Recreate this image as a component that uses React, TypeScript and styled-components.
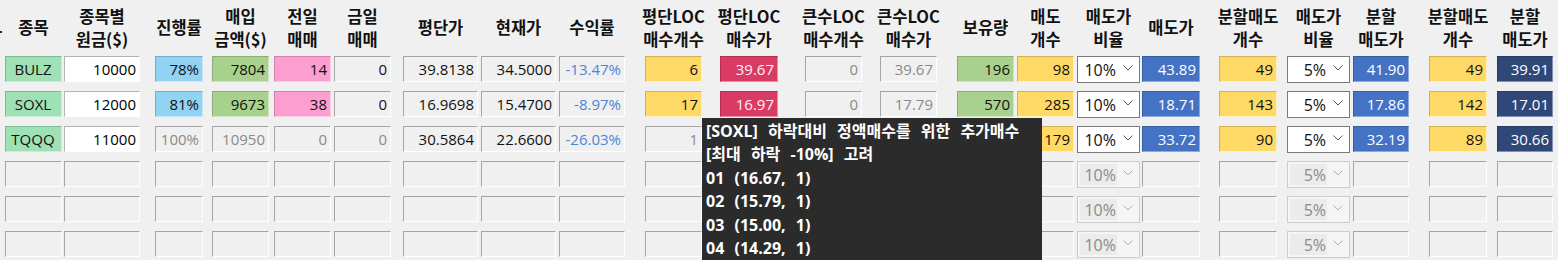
import React from "react";
import styled, { createGlobalStyle, css } from "styled-components";

const GlobalStyle = createGlobalStyle`
  html, body { margin: 0; padding: 0; background: #f0f0f0; }
  body { width: 1558px; height: 260px; overflow: hidden; }
`;

type Variant =
  | "name" | "input" | "sky" | "green" | "pink" | "ro" | "roBlue" | "dis"
  | "yellow" | "red" | "blue" | "navy" | "empty" | "combo" | "comboDis";

interface ColDef { l: number; w: number; h: string }

const cols: ColDef[] = [
  { l: 5, w: 57, h: "종목" },
  { l: 64, w: 76, h: "종목별\n원금($)" },
  { l: 155, w: 48, h: "진행률" },
  { l: 212, w: 57, h: "매입\n금액($)" },
  { l: 274, w: 57, h: "전일\n매매" },
  { l: 334, w: 57, h: "금일\n매매" },
  { l: 403, w: 75, h: "평단가" },
  { l: 481, w: 75, h: "현재가" },
  { l: 559, w: 66, h: "수익률" },
  { l: 645, w: 57, h: "평단LOC\n매수개수" },
  { l: 720, w: 58, h: "평단LOC\n매수가" },
  { l: 805, w: 57, h: "큰수LOC\n매수개수" },
  { l: 880, w: 57, h: "큰수LOC\n매수가" },
  { l: 957, w: 57, h: "보유량" },
  { l: 1017, w: 57, h: "매도\n개수" },
  { l: 1077, w: 63, h: "매도가\n비율" },
  { l: 1142, w: 58, h: "매도가" },
  { l: 1219, w: 58, h: "분할매도\n개수" },
  { l: 1287, w: 63, h: "매도가\n비율" },
  { l: 1353, w: 56, h: "분할\n매도가" },
  { l: 1429, w: 58, h: "분할매도\n개수" },
  { l: 1497, w: 56, h: "분할\n매도가" },
];

const gaps = cols.map((c, i) => (i === 0 ? c.l : c.l - (cols[i - 1].l + cols[i - 1].w)));

type CellSpec = [Variant, string];

const rows: CellSpec[][] = [
  [
    ["name", "BULZ"], ["input", "10000"], ["sky", "78%"], ["green", "7804"], ["pink", "14"], ["ro", "0"],
    ["ro", "39.8138"], ["ro", "34.5000"], ["roBlue", "-13.47%"], ["yellow", "6"], ["red", "39.67"],
    ["dis", "0"], ["dis", "39.67"], ["green", "196"], ["yellow", "98"], ["combo", "10%"], ["blue", "43.89"],
    ["yellow", "49"], ["combo", "5%"], ["blue", "41.90"], ["yellow", "49"], ["navy", "39.91"],
  ],
  [
    ["name", "SOXL"], ["input", "12000"], ["sky", "81%"], ["green", "9673"], ["pink", "38"], ["ro", "0"],
    ["ro", "16.9698"], ["ro", "15.4700"], ["roBlue", "-8.97%"], ["yellow", "17"], ["red", "16.97"],
    ["dis", "0"], ["dis", "17.79"], ["green", "570"], ["yellow", "285"], ["combo", "10%"], ["blue", "18.71"],
    ["yellow", "143"], ["combo", "5%"], ["blue", "17.86"], ["yellow", "142"], ["navy", "17.01"],
  ],
  [
    ["name", "TQQQ"], ["input", "11000"], ["dis", "100%"], ["dis", "10950"], ["dis", "0"], ["dis", "0"],
    ["ro", "30.5864"], ["ro", "22.6600"], ["roBlue", "-26.03%"], ["dis", "1"], ["dis", "30.59"],
    ["dis", "0"], ["dis", "0"], ["green", "358"], ["yellow", "179"], ["combo", "10%"], ["blue", "33.72"],
    ["yellow", "90"], ["combo", "5%"], ["blue", "32.19"], ["yellow", "89"], ["navy", "30.66"],
  ],
];

const emptyRow: CellSpec[] = cols.map((_, i) =>
  i === 15 ? ["comboDis", "10%"] : i === 18 ? ["comboDis", "5%"] : ["empty", ""]
);
const allRows = [...rows, emptyRow, emptyRow, emptyRow];

const palette: Record<string, { bg: string; fg: string; tl: string; br: string }> = {
  name: { bg: "#9fe0b4", fg: "#111", tl: "#7fb893", br: "#c9eed5" },
  input: { bg: "#ffffff", fg: "#000", tl: "#b4b4b4", br: "#ffffff" },
  sky: { bg: "#92d3f3", fg: "#111", tl: "#78adc8", br: "#c4e8fa" },
  green: { bg: "#a9d18e", fg: "#111", tl: "#8bac74", br: "#cfe5c0" },
  pink: { bg: "#fc9fd0", fg: "#111", tl: "#cf82aa", br: "#fdcbe5" },
  ro: { bg: "#f0f0f0", fg: "#111", tl: "#a5a5a5", br: "#ffffff" },
  roBlue: { bg: "#f0f0f0", fg: "#4a86d8", tl: "#a5a5a5", br: "#ffffff" },
  dis: { bg: "#f0f0f0", fg: "#8a8a8a", tl: "#a5a5a5", br: "#ffffff" },
  empty: { bg: "#f0f0f0", fg: "#8a8a8a", tl: "#a5a5a5", br: "#ffffff" },
  yellow: { bg: "#ffd966", fg: "#111", tl: "#d1b254", br: "#fff0c0" },
  red: { bg: "#da3b64", fg: "#fff2f5", tl: "#b33052", br: "#ea8aa3" },
  blue: { bg: "#4472c4", fg: "#ffffff", tl: "#385ea1", br: "#8ea9dc" },
  navy: { bg: "#2f4878", fg: "#ffffff", tl: "#263b62", br: "#7f93b8" },
};

const Page = styled.div`
  position: relative;
  width: 1558px;
  height: 260px;
  overflow: hidden;
  background: #f0f0f0;
`;

const HeaderRow = styled.div`
  display: flex;
  height: 56px;
`;

const EdgeDot = styled.div`
  width: 2px;
  height: 2px;
  margin-top: 31px;
  background: #222;
  flex: none;
`;

const HeadCell = styled.div<{ $w: number; $ml: number }>`
  flex: none;
  width: ${(p) => p.$w}px;
  margin-left: ${(p) => p.$ml}px;
  display: flex;
  align-items: center;
  justify-content: center;
  font-family: "Noto Sans CJK KR", sans-serif;
  font-weight: 700;
  font-size: 16.5px;
  line-height: 23px;
  color: #111;
  text-align: center;
  white-space: pre;
  padding-bottom: 1px;
`;

const Body = styled.div`
  display: flex;
  flex-direction: column;
  gap: 9px;
`;

const Row = styled.div`
  display: flex;
  height: 26px;
`;

const Cell = styled.div<{ $w: number; $ml: number; $v: Variant }>`
  flex: none;
  box-sizing: border-box;
  width: ${(p) => p.$w}px;
  margin-left: ${(p) => p.$ml}px;
  height: 26px;
  background: ${(p) => palette[p.$v].bg};
  color: ${(p) => palette[p.$v].fg};
  border-top: 1px solid ${(p) => palette[p.$v].tl};
  border-left: 1px solid ${(p) => palette[p.$v].tl};
  border-right: 1px solid ${(p) => palette[p.$v].br};
  border-bottom: 1px solid ${(p) => palette[p.$v].br};
  font-family: "Open Sans", "Noto Sans CJK KR", sans-serif;
  font-size: 15px;
  line-height: 24px;
  text-align: ${(p) => (p.$v === "name" ? "center" : "right")};
  padding: 0 3px 0 2px;
  white-space: nowrap;
  overflow: hidden;
`;

const Combo = styled.div<{ $w: number; $ml: number; $disabled?: boolean }>`
  flex: none;
  box-sizing: border-box;
  width: ${(p) => p.$w}px;
  margin-left: ${(p) => p.$ml}px;
  height: 27px;
  display: flex;
  align-items: center;
  border: 1px solid #7a7a7a;
  background: #ffffff;
  color: #111;
  font-family: "Open Sans", "Noto Sans CJK KR", sans-serif;
  font-size: 16px;
  ${(p) =>
    p.$disabled &&
    css`
      border-color: #cccccc;
      background: #f5f5f5;
      color: #8a8a8a;
    `}
`;

const ComboText = styled.div<{ $disabled?: boolean }>`
  flex: 1;
  display: flex;
  align-items: center;
  justify-content: flex-end;
  padding-right: 1px;
  background: ${(p) => (p.$disabled ? "#ebebeb" : "transparent")};
  margin: ${(p) => (p.$disabled ? "2px 0 2px 2px" : "0")};
  height: ${(p) => (p.$disabled ? "21px" : "100%")};
`;

const ComboArrow = styled.div`
  flex: none;
  width: 22px;
  display: flex;
  align-items: center;
  justify-content: center;
  padding-bottom: 4px;
`;

const Tooltip = styled.div`
  position: absolute;
  left: 702px;
  top: 118px;
  width: 340px;
  height: 160px;
  box-sizing: border-box;
  background: #2b2b2b;
  color: #ffffff;
  padding: 2px 0 0 4px;
  font-family: "Open Sans", "Noto Sans CJK KR", sans-serif;
  font-weight: 700;
  font-size: 16px;
  line-height: 23.4px;
  word-spacing: 6px;
  white-space: pre;
`;

const TipLine = styled.div``;

const Chevron: React.FC<{ color: string }> = ({ color }) => (
  <svg width="10" height="6" viewBox="0 0 10 6">
    <polyline points="0.5,0.5 5,5 9.5,0.5" fill="none" stroke={color} strokeWidth="1" />
  </svg>
);

const tipLines = [
  "[SOXL] 하락대비 정액매수를 위한 추가매수",
  "[최대 하락 -10%] 고려",
  "01 (16.67, 1)",
  "02 (15.79, 1)",
  "03 (15.00, 1)",
  "04 (14.29, 1)",
];

export default function App() {
  return (
    <>
      <GlobalStyle />
      <Page>
        <HeaderRow>
          <EdgeDot />
          {cols.map((c, i) => (
            <HeadCell key={i} $w={c.w} $ml={i === 0 ? gaps[0] - 2 : gaps[i]}>
              {c.h}
            </HeadCell>
          ))}
        </HeaderRow>
        <Body>
          {allRows.map((r, ri) => (
            <Row key={ri}>
              {r.map(([v, t], ci) => {
                const c = cols[ci];
                if (v === "combo" || v === "comboDis") {
                  const dis = v === "comboDis";
                  return (
                    <Combo key={ci} $w={c.w} $ml={gaps[ci]} $disabled={dis}>
                      <ComboText $disabled={dis}>{t}</ComboText>
                      <ComboArrow>
                        <Chevron color={dis ? "#b0b0b0" : "#555"} />
                      </ComboArrow>
                    </Combo>
                  );
                }
                return (
                  <Cell key={ci} $w={c.w} $ml={gaps[ci]} $v={v}>
                    {t}
                  </Cell>
                );
              })}
            </Row>
          ))}
        </Body>
        <Tooltip>
          {tipLines.map((l, i) => (
            <TipLine key={i}>{l}</TipLine>
          ))}
        </Tooltip>
      </Page>
    </>
  );
}
